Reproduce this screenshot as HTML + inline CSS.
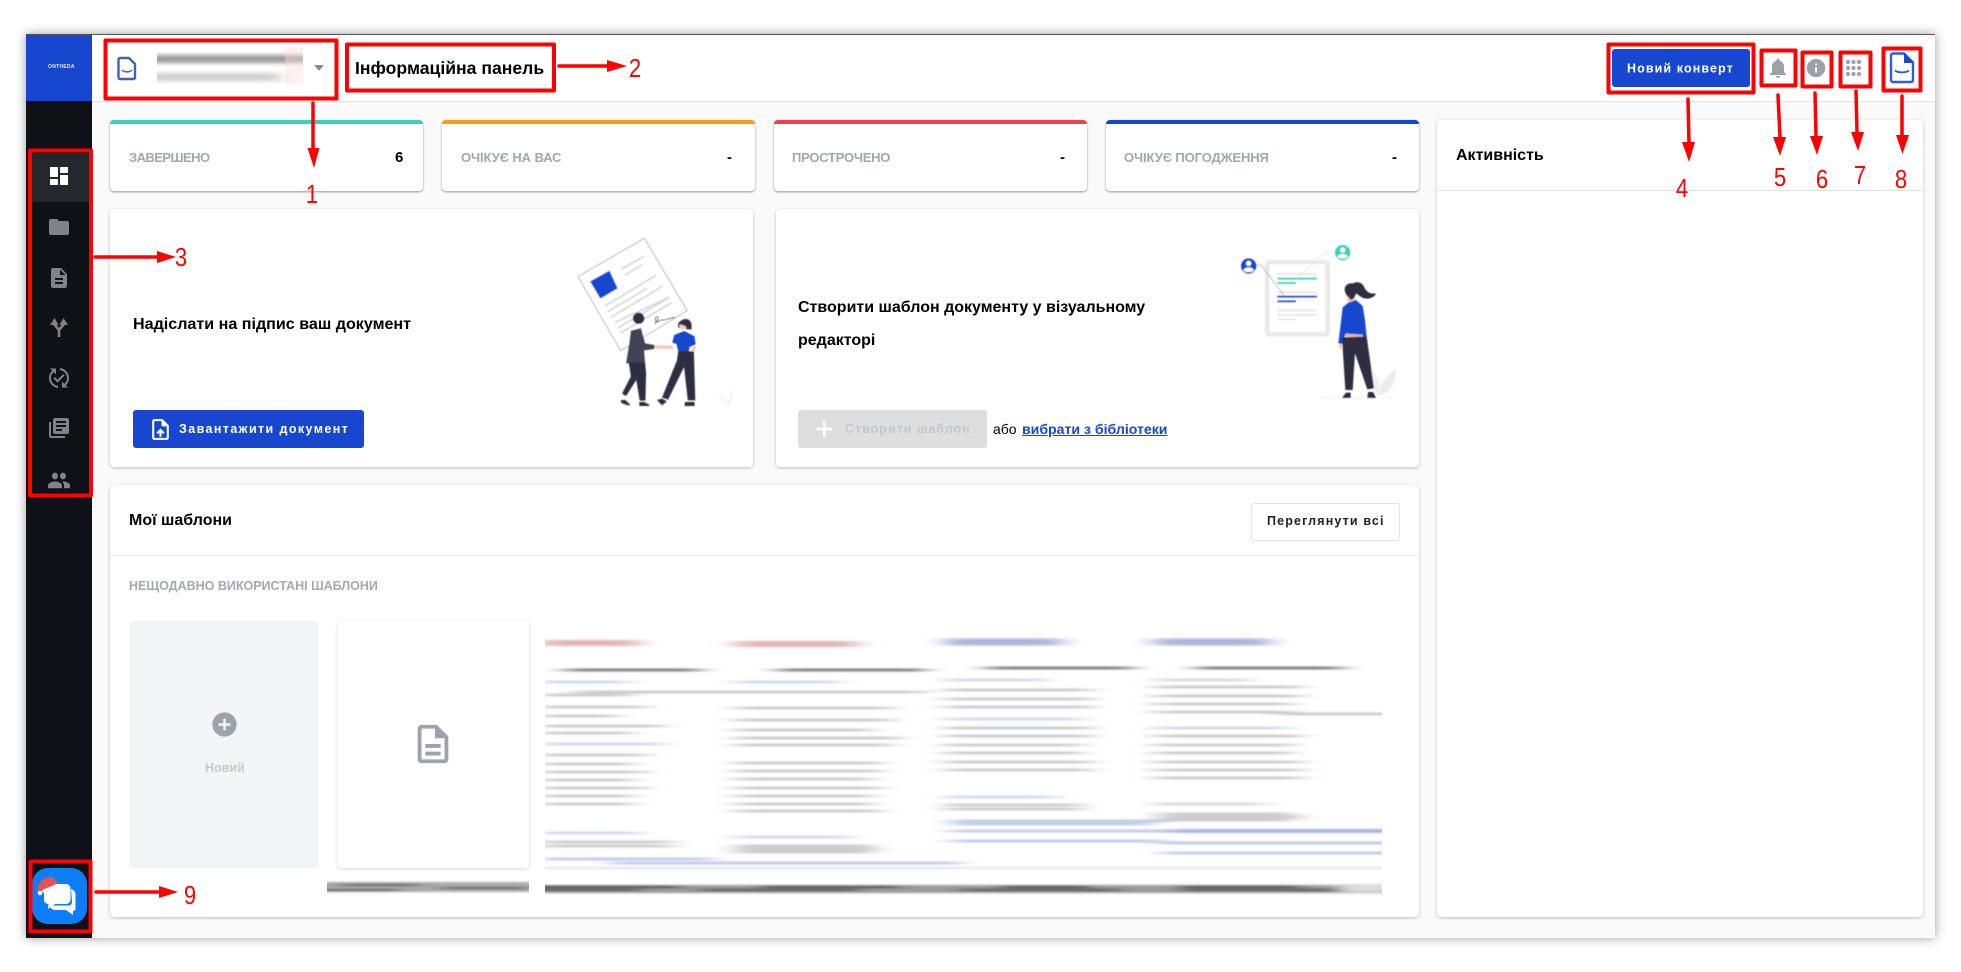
<!DOCTYPE html>
<html lang="uk"><head><meta charset="utf-8"><title>Інформаційна панель</title>
<style>
html,body{margin:0;padding:0;background:#fff;width:1961px;height:972px;overflow:hidden;font-family:"Liberation Sans",sans-serif;color:#000}
.a{position:absolute}
.t{position:absolute;white-space:nowrap;height:20px;line-height:20px}
#frame{left:26px;top:34px;width:1909px;height:904px;background:#fafafa;box-shadow:0 0 10px rgba(0,0,0,.4)}
.card{position:absolute;background:#fff;border-radius:4px;box-shadow:0 1px 3px rgba(0,0,0,.25)}
.stat{top:120px;height:71px;width:313px;border-top:4px solid;box-sizing:border-box;border-radius:4px;background:#fff;position:absolute;box-shadow:0 1px 2px rgba(0,0,0,.4)}
.lbl{font-size:13px;font-weight:700;color:#a2a7ae;top:148px;letter-spacing:-.1px}
.val{font-size:15px;font-weight:700;top:148px}
.btn{position:absolute;background:#1746cf;border-radius:3px}
svg{position:absolute;overflow:visible}
</style></head><body>
<div class="a" id="frame"></div>
<div class="a" style="left:26px;top:34px;width:1909px;height:1px;background:#555"></div>
<!-- header -->
<div class="a" style="left:92px;top:35px;width:1843px;height:66px;background:#fff;border-bottom:1px solid #e3e3e3"></div>
<div class="a" style="left:339px;top:35px;width:1px;height:66px;background:#e8e8e8"></div>
<!-- sidebar -->
<div class="a" style="left:26px;top:101px;width:66px;height:837px;background:#0e1116"></div>
<div class="a" style="left:26px;top:35px;width:66px;height:66px;background:#1746cf"></div>
<div class="t" style="left:48px;top:57px;font-size:5px;font-weight:700;color:#e8ecff;letter-spacing:.3px">ONTHEDA</div>
<div class="a" style="left:30px;top:153px;width:62px;height:49px;background:#24272c"></div>

<svg style="left:0;top:0" width="1961" height="972" viewBox="0 0 1961 972">
 <defs>
  <filter id="bl" filterUnits="userSpaceOnUse" x="500" y="600" width="950" height="320"><feGaussianBlur stdDeviation="12 1"/></filter>
  <filter id="bb" filterUnits="userSpaceOnUse" x="300" y="860" width="1150" height="50"><feGaussianBlur stdDeviation="9 1.1"/></filter>
  <filter id="bh" filterUnits="userSpaceOnUse" x="130" y="40" width="200" height="60"><feGaussianBlur stdDeviation="7 2"/></filter>
  <filter id="soft" x="-5%" y="-5%" width="110%" height="110%"><feGaussianBlur stdDeviation="1.200"/></filter>
  <clipPath id="c1"><rect x="545" y="620" width="837" height="255"/></clipPath>
  <clipPath id="c2"><rect x="327" y="878" width="202" height="20"/></clipPath>
  <clipPath id="c4"><rect x="545" y="878" width="837" height="20"/></clipPath>
  <clipPath id="c3"><rect x="157" y="50" width="146" height="35"/></clipPath>
 </defs>
 <g fill="#808287">
  <path transform="translate(47 164)" fill="#fff" d="M3 13h8V3H3v10zm0 8h8v-6H3v6zm10 0h8V11h-8v10zm0-18v6h8V3h-8z"/>
  <path transform="translate(47 215)" d="M10 4H4c-1.100 0-1.990.9-1.990 2L2 18c0 1.100.9 2 2 2h16c1.100 0 2-.9 2-2V8c0-1.100-.9-2-2-2h-8l-2-2z"/>
  <path transform="translate(47 266)" d="M14 2H6c-1.100 0-1.990.9-1.990 2L4 20c0 1.100.89 2 1.990 2H18c1.100 0 2-.9 2-2V8l-6-6zm2 16H8v-2h8v2zm0-4H8v-2h8v2zm-3-5V3.500L18.500 9H13z"/>
  <path d="M59 337V330L54 324M59 330L64 324" fill="none" stroke="#808287" stroke-width="2.600"/>
  <path d="M50 325L54.500 318 58.500 325zM59.500 325L63.500 318 68 325z"/>
  <path transform="translate(47 366)" d="M17.660 9.530l-7.070 7.070-4.240-4.240 1.410-1.410 2.830 2.830 5.660-5.660 1.410 1.410zM4 12c0-2.330 1.020-4.420 2.620-5.880L9 8.500v-6H3l2.200 2.200C3.240 6.520 2 9.110 2 12c0 5.190 3.950 9.450 9 9.950v-2.020c-3.940-.49-7-3.860-7-7.930zm18 0c0-5.190-3.950-9.450-9-9.950v2.020c3.940.49 7 3.860 7 7.930 0 2.330-1.020 4.420-2.620 5.880L15 15.500v6h6l-2.200-2.200c1.960-1.820 3.200-4.410 3.200-7.300z"/>
  <path transform="translate(47 416)" d="M4 6H2v14c0 1.100.9 2 2 2h14v-2H4V6zm16-4H8c-1.100 0-2 .9-2 2v12c0 1.100.9 2 2 2h12c1.100 0 2-.9 2-2V4c0-1.100-.9-2-2-2zm-1 9H9V9h10v2zm-4 4H9v-2h6v2zm4-8H9V5h10v2z"/>
  <path transform="translate(47 467) scale(1 1.120)" d="M16 11c1.660 0 2.990-1.340 2.990-3S17.660 5 16 5c-1.660 0-3 1.340-3 3s1.340 3 3 3zm-8 0c1.660 0 2.990-1.340 2.990-3S9.660 5 8 5C6.340 5 5 6.340 5 8s1.340 3 3 3zm0 2c-2.330 0-7 1.170-7 3.500V19h14v-2.500c0-2.330-4.670-3.500-7-3.500zm8 0c-.29 0-.62.02-.97.05 1.160.84 1.970 1.970 1.970 3.450V19h6v-2.500c0-2.330-4.670-3.500-7-3.500z"/>
 </g>
 <!-- chat app icon -->
 <rect x="32" y="868" width="55" height="56" rx="16" fill="#0b7ef8"/>
 <path d="M71 889c3 1 4.500 3 4.500 6v13c0 2-1 3-2.500 3l0 4-7-5H55c-2 0-4-1-5-3.500l2-1h17c2 0 3-2 3-4z" fill="#fff"/>
 <path d="M49 884h17c2.500 0 4.500 2 4.500 4.500v11c0 2.500-2 4.500-4.500 4.500H55l-7 5 .5-5c-2.500 0-4.500-2-4.500-4.500v-11c0-2.500 2.500-4.500 5-4.500z" fill="#fff"/>
 <path d="M37.500 892c0-9 6-15 12-15 4.500 0 6.500 3 7.500 7l-15 6-3 3z" fill="#e9514e"/>
 <path d="M42 890c5-1 10-3 14-6.500l2 2.500c-4 3.500-10 6-15 7z" fill="#f3f6fb"/>
 <circle cx="40" cy="893" r="2.300" fill="#f3f6fb"/>
</svg>

<!-- stats -->
<div class="stat" style="left:110px;border-color:#3ccfb8"></div>
<div class="stat" style="left:442px;border-color:#f29d1c"></div>
<div class="stat" style="left:774px;border-color:#e8434f"></div>
<div class="stat" style="left:1106px;border-color:#1746cf"></div>
<div class="t lbl" style="left:129px;letter-spacing:-.55px">ЗАВЕРШЕНО</div>
<div class="t val" style="left:395px">6</div>
<div class="t lbl" style="left:461px">ОЧІКУЄ НА ВАС</div>
<div class="t val" style="left:727px">-</div>
<div class="t lbl" style="left:792px;letter-spacing:-.25px">ПРОСТРОЧЕНО</div>
<div class="t val" style="left:1060px">-</div>
<div class="t lbl" style="left:1124px">ОЧІКУЄ ПОГОДЖЕННЯ</div>
<div class="t val" style="left:1392px">-</div>

<!-- activity -->
<div class="card" style="left:1437px;top:120px;width:486px;height:797px"></div>
<div class="a" style="left:1437px;top:190px;width:486px;height:1px;background:#e3e3e3"></div>
<div class="t" style="left:1456px;top:146px;font-size:16px;font-weight:700">Активність</div>

<!-- big cards -->
<div class="card" style="left:110px;top:209px;width:643px;height:258px"></div>
<div class="card" style="left:776px;top:209px;width:643px;height:258px"></div>
<div class="card" style="left:110px;top:485px;width:1309px;height:432px"></div>
<div class="a" style="left:110px;top:555px;width:1309px;height:1px;background:#e6e6e6"></div>

<div class="t" style="left:133px;top:314px;font-size:16.100px;font-weight:700">Надіслати на підпис ваш документ</div>
<div class="btn" style="left:133px;top:410px;width:231px;height:38px"></div>
<svg style="left:148px;top:417px" width="25" height="25" viewBox="0 0 24 24"><path fill="#fff" d="M14 2H6c-1.100 0-1.990.9-1.990 2L4 20c0 1.100.89 2 1.990 2H18c1.100 0 2-.9 2-2V8l-6-6zm4 18H6V4h7v5h5v11zM8 15.010l1.410 1.410L11 14.840V19h2v-4.160l1.590 1.590L16 15.010 12.010 11z"/></svg>
<div class="t" style="left:179px;top:419px;font-size:12.500px;font-weight:700;color:#fff;letter-spacing:1.400px">Завантажити документ</div>

<div class="t" style="left:798px;top:298px;font-size:16px;font-weight:700">Створити шаблон документу у візуальному</div>
<div class="t" style="left:798px;top:331px;font-size:16px;font-weight:700">редакторі</div>
<div class="a" style="left:798px;top:410px;width:189px;height:38px;background:#dedede;border-radius:3px"></div>
<svg style="left:815px;top:420px" width="18" height="18" viewBox="0 0 18 18"><path d="M8 1h2.400v6.800H17v2.400h-6.600V17H8v-6.800H1V7.800h7z" fill="#fff"/></svg>
<div class="t" style="left:845px;top:419px;font-size:12.500px;font-weight:700;color:#c3c6cb;letter-spacing:1px">Створити шаблон</div>
<div class="t" style="left:993px;top:419px;font-size:14px">або</div>
<div class="t" style="left:1022px;top:419px;font-size:14.100px;font-weight:700;color:#1746cf;text-decoration:underline">вибрати з бібліотеки</div>

<!-- illustration 1 -->
<svg style="left:540px;top:220px" width="240" height="200" viewBox="0 0 708 600" preserveAspectRatio="none">
 <g filter="url(#soft)">
 <path d="M112 170L308 55 434 272 238 392z" fill="#fff" stroke="#a8a8b4" stroke-width="2.500"/>
 <path d="M148 184L205 152 229 205 178 236z" fill="#1746cf"/>
 <g stroke="#d9d9d9" stroke-width="5.500" fill="none">
  <path d="M240 148L308 108M250 165L302 134M192 258L342 166M200 275L316 205M210 292L362 198M220 308L380 232M228 325L382 232M236 340L388 248"/>
 </g>
 <path d="M338 312c8-6 14-20 8-22-8-1-8 14 0 16 6 0 8-8 14-6 10 2 22-6 38-8" fill="none" stroke="#2f2e41" stroke-width="2.500"/>
 <path d="M330 376l62 0 2 12-54-2z" fill="#f2cdbd"/>
 <!-- man -->
 <circle cx="291" cy="295" r="17" fill="#2f2e41"/>
 <path d="M268 332l30-8 12 46 27 5 0 12-30 4 3 39h-56l8-50z" fill="#434256"/>
 <path d="M262 428h48l3 32-2 82h-17l-10-62-30 48-12-7 26-52z" fill="#2f2e41"/>
 <path d="M238 540l14 0 14 14-4 3-22-8zM293 546h14l15 8v4h-29z" fill="#2f2e41"/>
 <!-- woman -->
 <path d="M407 322c-2-24 36-38 40-8v14l-10-2-20 2-3-4z" fill="#2f2e41"/>
 <circle cx="422" cy="318" r="11" fill="#f2cdbd"/>
 <path d="M407 312c6-16 36-18 40 4v12h-14c2-10-12-14-26-16z" fill="#2f2e41"/>
 <path d="M396 345l30-12 30 16 3 24-18 8-2 14-32-3-4-20-13-4z" fill="#1746cf"/>
 <path d="M440 396l14-20 8 4-14 30z" fill="#f2cdbd"/>
 <path d="M408 392l46 3 4 146h-22l-11-100-47 98-18-6 44-112z" fill="#2f2e41"/>
 <path d="M345 540l15-4 14 8-14 12zM428 546h28v12h-30z" fill="#2f2e41"/>
 <path d="M530 525l25 28c6-10 10-25 12-42" fill="none" stroke="#eee" stroke-width="4"/>
 </g>
</svg>

<!-- illustration 2 -->
<svg style="left:1220px;top:220px" width="200" height="200" viewBox="0 0 600 600">
 <g filter="url(#soft)">
 <rect x="135" y="120" width="195" height="230" rx="14" fill="#e9e9e9"/>
 <rect x="148" y="132" width="168" height="204" rx="6" fill="#fff"/>
 <g fill="#e9e9e9"><rect x="172" y="159" width="119" height="6"/><rect x="172" y="214" width="119" height="6"/><rect x="172" y="268" width="119" height="6"/><rect x="172" y="282" width="119" height="6"/><rect x="172" y="295" width="56" height="6"/></g>
 <g fill="#3ccfb8"><rect x="172" y="173" width="119" height="6"/><rect x="172" y="186" width="56" height="6"/></g>
 <g fill="#1746cf"><rect x="172" y="227" width="119" height="6"/><rect x="172" y="241" width="56" height="6"/></g>
 <path d="M110 136h14l68 90" fill="none" stroke="#9a9aa6" stroke-width="2"/>
 <path d="M232 175L315 98h30" fill="none" stroke="#bdeee5" stroke-width="2"/>
 <circle cx="86" cy="138" r="23" fill="#1746cf"/><circle cx="86" cy="130" r="8" fill="#fff"/><path d="M70 151c3-12 29-12 32 0-8 7-24 7-32 0z" fill="#fff"/>
 <circle cx="368" cy="98" r="23" fill="#3ccfb8"/><circle cx="368" cy="90" r="8" fill="#fff"/><path d="M352 111c3-12 29-12 32 0-8 7-24 7-32 0z" fill="#fff"/>
 <path d="M450 440c14 20 26 30 30 60l-6 28c-20-10-34-50-24-88z" fill="#f0f0f0"/>
 <path d="M528 448c-20 10-44 30-54 80 30-6 52-30 54-80z" fill="#ececec"/>
 <path d="M305 535h210" stroke="#e6e6e6" stroke-width="2"/>
 <path d="M380 226h26l2 22h-26z" fill="#f2cdbd"/>
 <path d="M368 262l17-14 23-8 20 18 7 42 7 70-12 2-2-27-53 0-7 27-13-2z" fill="#1746cf"/>
 <path d="M374 208c0-14 14-20 26-18 12-8 26-2 32 10 6 16 20 24 36 20-4 14-30 22-46 10-6-4-10-8-14-10-2 8-6 16-14 20-6-2-6-8-10-10-6-6-10-14-10-22z" fill="#2f2e41"/>
 <path d="M356 372h12l-2 16-8-2zM432 372l10-2 0 10h-8z" fill="#f2cdbd"/>
 <path d="M376 340l52 4-1 8-50-2z" fill="#e0b4a0"/>
 <path d="M366 352l74-2 22 155-20 3-37-108-7 110h-22z" fill="#2f2e41"/>
 <path d="M378 518h14v16h-26zM444 516h16l8 18h-26z" fill="#2f2e41"/>
 </g>
</svg>

<!-- templates -->
<div class="t" style="left:129px;top:511px;font-size:16px;font-weight:700">Мої шаблони</div>
<div class="a" style="left:1251px;top:503px;width:147px;height:36px;background:#fff;border:1px solid #e2e2e2;border-radius:3px"></div>
<div class="t" style="left:1267px;top:511px;font-size:12.500px;font-weight:700;letter-spacing:1.150px;color:#222">Переглянути всі</div>
<div class="t" style="left:129px;top:576px;font-size:12.500px;font-weight:700;color:#a3a9b0">НЕЩОДАВНО ВИКОРИСТАНІ ШАБЛОНИ</div>
<div class="a" style="left:129px;top:621px;width:190px;height:247px;background:#f3f4f6;border-radius:4px"></div>
<svg style="left:210px;top:710px" width="29" height="29" viewBox="0 0 24 24"><path fill="#9ca3ad" d="M12 2C6.480 2 2 6.480 2 12s4.480 10 10 10 10-4.480 10-10S17.520 2 12 2zm5 11h-4v4h-2v-4H7v-2h4V7h2v4h4v2z"/></svg>
<div class="t" style="left:205px;top:758px;font-size:12.500px;font-weight:700;color:#c6cad0">Новий</div>
<div class="a" style="left:338px;top:621px;width:191px;height:247px;background:#fff;border-radius:4px;box-shadow:0 1px 4px rgba(0,0,0,.16)"></div>
<svg style="left:410px;top:721px" width="46" height="46" viewBox="0 0 24 24"><path fill="#9ca3ad" d="M8 16h8v2H8zm0-4h8v2H8zm6-10H6c-1.100 0-2 .9-2 2v16c0 1.100.89 2 1.990 2H18c1.100 0 2-.9 2-2V8l-6-6zm4 18H6V4h7v5h5v11z"/></svg>

<!-- blurred previews + annotations -->
<svg style="left:0;top:0" width="1961" height="972" viewBox="0 0 1961 972">
 <g clip-path="url(#c3)"><g filter="url(#bh)">
  <rect x="145" y="55" width="170" height="8" fill="#999"/>
  <rect x="145" y="73" width="135" height="8" fill="#cfcfcf"/>
 </g></g>
 <rect x="285" y="47" width="18" height="37" fill="#ffdcdc" opacity=".4"/>

 <g clip-path="url(#c1)">
  <g filter="url(#bl)" fill="none" stroke-width="2">
   <g stroke="#e2b6b6" stroke-width="6"><path d="M540 643H640M735 644H858"/></g>
   <g stroke="#abb5d8" stroke-width="7"><path d="M945 642H1062M1154 642H1270"/></g>
   <g stroke="#555" stroke-width="2.200"><path d="M565 670H700M778 670H925M986 668H1133M1196 668H1343"/></g>
   <g stroke="#bcc8e6"><path d="M540 682H630M735 682H840M945 680H1046M1154 680H1250M540 744H664M945 719H1082M1154 728H1288M540 833H640M735 837H850M945 797H1056M1154 804H1265"/></g>
   <g stroke="#b4b4b4"><path d="M575 692H925M540 695H632M540 707H645M540 716H618M540 726H664M540 733H632M540 755H645M540 764H632M540 772H645M540 780H632M540 788H645M540 796H632M540 804H632M540 842H672M540 846H672
   M735 708H892M735 720H892M735 730H872M735 738H900M735 745H892M735 763H882M735 771H882M735 779H872M735 788H882M735 796H872M735 804H872M735 811H882M735 846H872M735 849H878M735 852H872
   M945 690H1092M945 699H1092M945 707H1092M945 728H1092M945 736H1092M945 745H1082M945 753H1082M945 762H1092M945 770H1092M945 805H1082M945 809H1082
   M1154 687H1302M1154 696H1302M1154 704H1292M1154 712H1292M1280 714H1400M1154 736H1302M1154 745H1292M1154 753H1292M1154 762H1302M1154 770H1302M1154 778H1302M1158 814H1292M1158 817H1302M1158 820H1292"/></g>
   <g stroke="#a4b2de"><path d="M540 859H712M610 863H960M950 821H1165M953 824H1152M950 831H1182M950 841H1162M1172 830H1400M1172 832H1400M1158 843H1400M1162 853H1400"/></g>
   <path d="M520 868H1400" stroke="#dcdcdc" stroke-width="1.800"/>
  </g>
 </g>
 <g clip-path="url(#c4)"><g filter="url(#bb)" fill="none">
  <rect x="500" y="885" width="900" height="8" fill="#9a9a9a" stroke="none"/>
  <path d="M520 887H680M760 887H900M1000 887H1090M1180 887H1300" stroke="#333" stroke-width="2"/>
  <path d="M520 890H640M700 890H860M960 890H1120M1180 890H1340" stroke="#444" stroke-width="2"/>
  <path d="M1340 888H1400" stroke="#ddd" stroke-width="8"/>
 </g></g>
 <g clip-path="url(#c2)"><g filter="url(#bb)" fill="none">
  <rect x="300" y="882" width="240" height="10" fill="#aaa" stroke="none"/>
  <path d="M340 885H420M440 888H530M310 890H400" stroke="#555" stroke-width="2"/>
 </g></g>

 <!-- header icons -->
 <path d="M120 58h9l6 6v13.500c0 1-.8 1.500-1.500 1.500h-13.500c-1 0-1.500-.8-1.500-1.500V59.500c0-.8.7-1.500 1.500-1.500z" fill="#fff" stroke="#3e62b4" stroke-width="2.400" stroke-linejoin="round"/>
 <path d="M122 70c2.500 2.500 7.500 2.500 10 0" fill="none" stroke="#3e62b4" stroke-width="1.500"/>
 <path d="M314 65h10l-5 6z" fill="#8c8c8c"/>
 <path transform="translate(1766 56)" fill="#9aa1a9" d="M12 22c1.100 0 2-.9 2-2h-4c0 1.100.89 2 2 2zm6-6v-5c0-3.070-1.640-5.640-4.500-6.320V4c0-.83-.67-1.500-1.500-1.500s-1.500.67-1.500 1.500v.68C7.630 5.360 6 7.920 6 11v5l-2 2v1h16v-1l-2-2z"/>
 <path transform="translate(1805 57) scale(.92)" fill="#9aa1a9" d="M12 2C6.480 2 2 6.480 2 12s4.480 10 10 10 10-4.480 10-10S17.520 2 12 2zm1 15h-2v-6h2v6zm0-8h-2V7h2v2z"/>
 <g fill="#9aa1a9"><circle cx="1848" cy="62" r="2.100"/><circle cx="1853.500" cy="62" r="2.100"/><circle cx="1859" cy="62" r="2.100"/><circle cx="1848" cy="68" r="2.100"/><circle cx="1853.500" cy="68" r="2.100"/><circle cx="1859" cy="68" r="2.100"/><circle cx="1848" cy="74" r="2.100"/><circle cx="1853.500" cy="74" r="2.100"/><circle cx="1859" cy="74" r="2.100"/></g>
 <path d="M1893 53.500h11l9 9V80c0 1.100-.9 2-2 2h-18c-1.100 0-2-.9-2-2V55.500c0-1.100.9-2 2-2z" fill="#fff" stroke="#2a5de8" stroke-width="2.400" stroke-linejoin="round"/>
 <path d="M1904 53l10 10h-10z" fill="#1f47c4"/>
 <path d="M1895 70.500c3 2.500 11 2.500 14 0" fill="none" stroke="#2a5de8" stroke-width="1.800"/>

 <!-- new envelope button -->
 <rect x="1612" y="49" width="138" height="38" rx="3" fill="#1746cf"/>
 <text x="1627" y="72.500" font-family="Liberation Sans" font-size="12.500" font-weight="700" fill="#fff" letter-spacing="1.100">Новий конверт</text>

 <!-- red annotation boxes -->
 <g fill="none" stroke="#f00" stroke-width="4" stroke-linejoin="round">
  <rect x="105.500" y="40.500" width="231" height="58"/>
  <rect x="347" y="44.500" width="207" height="46"/>
  <rect x="30" y="150.500" width="61" height="345"/>
  <rect x="1608.500" y="44.500" width="145" height="48"/>
  <rect x="1761.500" y="50.500" width="34" height="35"/>
  <rect x="1802.500" y="52.500" width="29" height="34"/>
  <rect x="1840.500" y="52.500" width="30" height="34"/>
  <rect x="1883.500" y="48.500" width="37" height="42"/>
  <rect x="30.500" y="861.500" width="60" height="70"/>
 </g>
 <!-- arrows -->
 <g stroke="#f00" stroke-width="3.500" fill="none" stroke-linecap="round">
  <path d="M313 103V150M559 66H608M95 257H158M1688 99L1689 143M1778 95L1780 137M1815 93L1816 136M1856 91L1857 132M1902 96V135M96 892H160"/>
 </g>
 <g fill="#f00">
  <path d="M307.500 148h12L314 168zM607 60l20 6-20 6zM157 251l19 6-19 6zM1682 142h13l-6 20zM1773 137h13l-6 19zM1810 136h13l-6 19zM1851 132h13l-6 19zM1896 135h13l-6.500 19zM159 886l19 6-19 6z"/>
 </g>
 <g fill="#f00" font-family="Liberation Sans" font-size="26" text-anchor="middle">
  <text transform="translate(312 203) scale(.85 1)">1</text>
  <text transform="translate(635 77) scale(.85 1)">2</text>
  <text transform="translate(181 266) scale(.85 1)">3</text>
  <text transform="translate(1682 197) scale(.85 1)">4</text>
  <text transform="translate(1780 186) scale(.85 1)">5</text>
  <text transform="translate(1822 188) scale(.85 1)">6</text>
  <text transform="translate(1860 184) scale(.85 1)">7</text>
  <text transform="translate(1901 188) scale(.85 1)">8</text>
  <text transform="translate(190 904) scale(.85 1)">9</text>
 </g>
</svg>
<div class="t" style="left:355px;top:58px;font-size:17.600px;font-weight:700">Інформаційна панель</div>
</body></html>
